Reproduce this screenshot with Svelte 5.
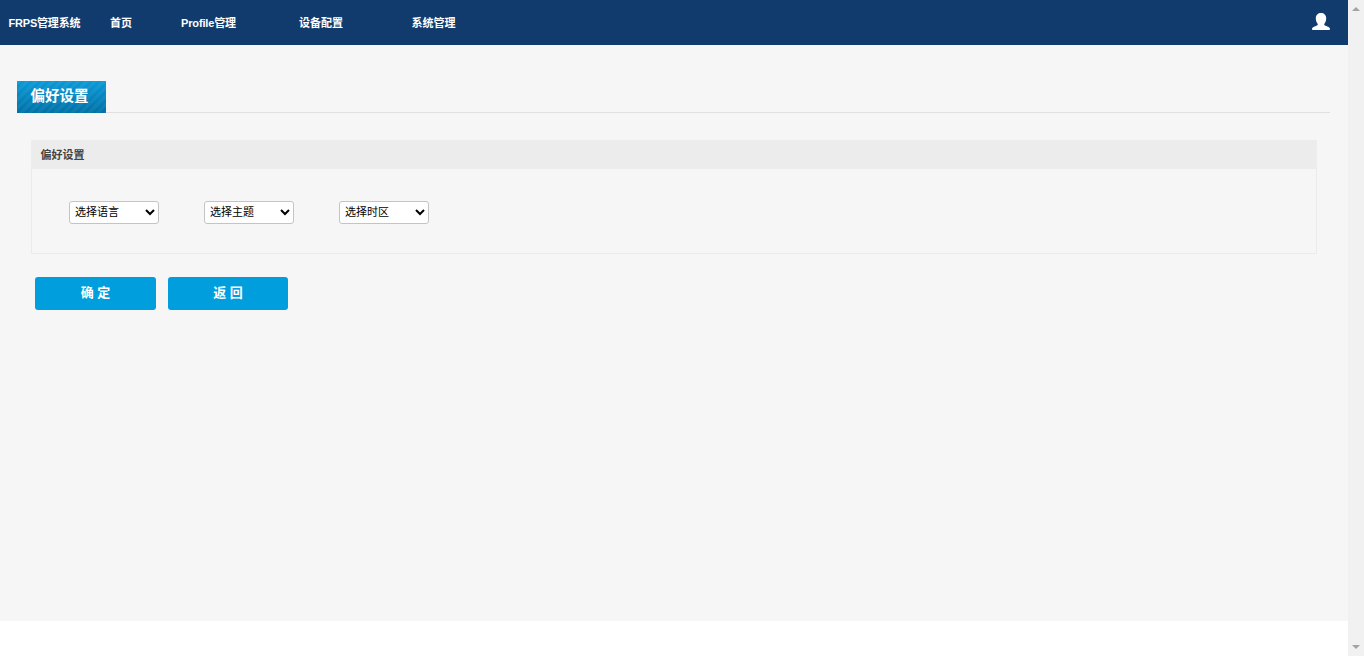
<script>
  const nav = ['首页', 'Profile管理', '设备配置', '系统管理'];
  const selects = ['选择语言', '选择主题', '选择时区'];
</script>

<div class="page">
  <div class="main">
    <header class="topbar">
      <span class="brand">FRPS管理系统</span>
      <nav class="nav">
        {#each nav as item}
          <a href="#top" class="nav-item">{item}</a>
        {/each}
      </nav>
      <svg class="user" viewBox="0 0 18 17" width="18" height="17" aria-hidden="true">
        <path d="M9 0C12 0 14.200 2 14.200 5.200 14.200 7.500 13.300 9.500 12.400 10.700 12 11.300 12.300 12.100 13 12.500L16 13.800C17.300 14.400 18 15.300 18 16.300 18 16.800 17.700 17 17.200 17L0.800 17C0.300 17 0 16.800 0 16.300 0 15.300 0.700 14.400 2 13.800L5 12.500C5.700 12.100 6 11.300 5.600 10.700 4.700 9.500 3.800 7.500 3.800 5.200 3.800 2 6 0 9 0Z" fill="#fff"/>
      </svg>
    </header>

    <div class="content">
      <div class="tabs"><div class="tab">偏好设置</div></div>

      <section class="panel">
        <div class="panel-head">偏好设置</div>
        <div class="panel-body">
          {#each selects as s}
            <select class="sel">
              <option>{s}</option>
            </select>
          {/each}
        </div>
      </section>

      <div class="actions">
        <button class="btn ok">确 定</button>
        <button class="btn back">返 回</button>
      </div>
    </div>
  </div>

  <aside class="scrollbar">
    <span class="arrow up"></span>
    <span class="arrow down"></span>
  </aside>
</div>

<style>
  :global(body) {
    margin: 0;
    background: #fff;
    overflow: hidden;
  }
  .page {
    display: flex;
    height: 656px;
    font-family: "Liberation Sans", "Noto Sans CJK SC", sans-serif;
  }
  .main {
    flex: 1;
    min-width: 0;
  }
  .topbar {
    height: 45px;
    box-sizing: border-box;
    background: #123b6d;
    display: flex;
    align-items: center;
    padding: 0 18px 1px 8.5px;
    color: #fff;
    font-size: 11px;
    font-weight: 700;
  }
  .brand {
    width: 101.5px;
    letter-spacing: -0.2px;
  }
  .nav {
    display: grid;
    grid-template-columns: 71px 118px 112.5px 60px;
    flex: 1;
  }
  .nav-item {
    color: #fff;
    text-decoration: none;
  }
  .nav-item:nth-child(2) {
    letter-spacing: -0.15px;
  }
  .user {
    display: block;
    margin-top: -2px;
  }
  .content {
    height: 576px;
    background: #f6f6f6;
    padding: 36px 18px 0 17px;
    box-sizing: border-box;
  }
  .tabs {
    height: 31px;
    border-bottom: 1px solid #e0e0e0;
  }
  .tab {
    width: 89px;
    height: 32px;
    box-sizing: border-box;
    padding-left: 13.500px;
    line-height: 30px;
    color: #fff;
    font-size: 14.500px;
    font-weight: 700;
    background:
      repeating-linear-gradient(135deg, rgba(255, 255, 255, 0.05) 0 3px, rgba(255, 255, 255, 0) 3px 6px),
      linear-gradient(#0a9ad8, #0071a6);
  }
  .panel {
    margin: 27px 13px 0 14px;
    border: 1px solid #ebebeb;
    border-top: 0;
  }
  .panel-head {
    height: 29px;
    margin: 0 -1px;
    padding-left: 9.500px;
    line-height: 30px;
    background: #ececec;
    color: #444;
    font-size: 11px;
    font-weight: 700;
  }
  .panel-body {
    height: 84px;
    box-sizing: border-box;
    padding: 32px 0 0 37px;
    display: flex;
    gap: 45px;
    align-items: flex-start;
  }
  .sel {
    width: 90px;
    height: 23px;
    box-sizing: border-box;
    border: 1px solid #c4c4c4;
    border-radius: 3px;
    background: #fff;
    color: #000;
    font-family: inherit;
    font-size: 11px;
    padding: 0 0 1px 1px;
    margin: 0;
  }
  .actions {
    display: flex;
    gap: 12px;
    margin: 23px 0 0 18px;
  }
  .btn {
    height: 33px;
    border: 0;
    border-radius: 3px;
    background: #009edd;
    color: #fff;
    font-family: inherit;
    font-size: 13px;
    font-weight: 700;
    padding: 0 0 5px;
  }
  .ok { width: 121px; }
  .back { width: 120px; }
  .scrollbar {
    width: 16px;
    flex: none;
    background: #f1f1f1;
    display: flex;
    flex-direction: column;
    justify-content: space-between;
    align-items: center;
    padding: 7px 0;
    box-sizing: border-box;
  }
  .arrow {
    width: 0;
    height: 0;
    border-left: 4px solid transparent;
    border-right: 4px solid transparent;
  }
  .up { border-bottom: 4px solid #a3a3a3; }
  .down { border-top: 4px solid #a3a3a3; }
</style>
